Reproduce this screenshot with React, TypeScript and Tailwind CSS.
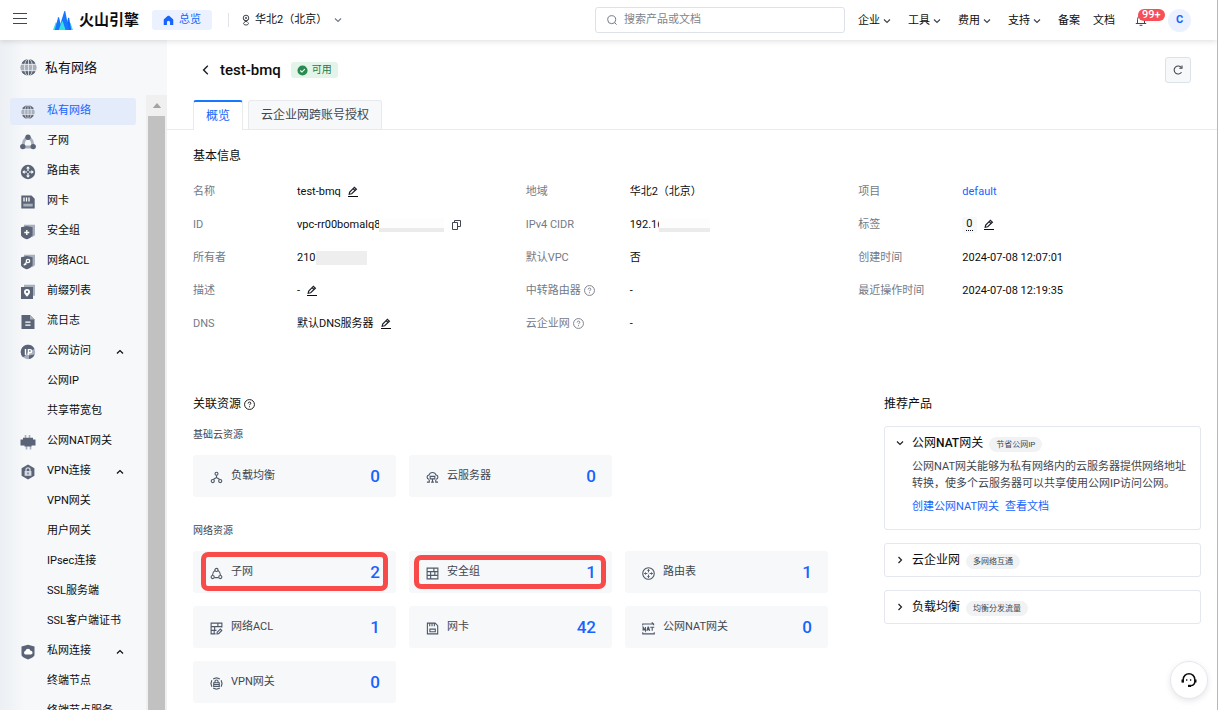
import React from "react";
import type { ReactNode } from "react";

type IconProps = { className?: string };

const DARK = "#5b6476";
const SOFT = "#a9b0bd";

/* ---------- small interface glyphs ---------- */

function Chevron({ dir, className = "" }: { dir: "up" | "down" | "left" | "right"; className?: string }) {
  const d = {
    up: "M2 6.5 5 3.5l3 3",
    down: "M2 3.5 5 6.5l3-3",
    left: "M6.5 1.5 3 5l3.5 3.5",
    right: "M3.5 2 6.5 5l-3 3",
  }[dir];
  return (
    <svg viewBox="0 0 10 10" fill="none" stroke="currentColor" strokeWidth="1.2" className={"shrink-0 " + className}>
      <path d={d} />
    </svg>
  );
}

function EditIcon() {
  return (
    <svg viewBox="0 0 12 12" className="size-3 shrink-0" fill="none" stroke="#1d2129" strokeWidth="1.2">
      <path d="M2.2 8.2 2.700 6 7.400 1.400 9.400 3.300 4.700 7.800Z" />
      <path d="M6.200 2.700 8.100 4.500" />
      <path d="M1 10.500h10" strokeWidth="1" stroke="#0c0d0e" />
    </svg>
  );
}

function CopyIcon() {
  return (
    <svg viewBox="0 0 12 12" className="size-3 shrink-0" fill="none" stroke="#42464e" strokeWidth="1">
      <path d="M2.500 3.500h5v7h-5z" />
      <path d="M4.500 3.500v-2h6v6h-3" />
    </svg>
  );
}

function HelpIcon() {
  return (
    <svg viewBox="0 0 12 12" className="size-[11px] shrink-0" fill="none" stroke="currentColor" strokeWidth="1">
      <circle cx="6" cy="6" r="5.400" />
      <path d="M4.500 4.900c0-1 .6-1.600 1.500-1.600s1.500.5 1.500 1.300c0 1-1.500 1-1.500 2.200" />
      <path d="M6 7.900v1.100" />
    </svg>
  );
}

function Logo() {
  return (
    <svg viewBox="0 0 20 19" className="h-[19px] w-5">
      <path d="M0 19 2.600 11.800c.2-.5.800-.5 1 0L6 19Z" fill="#35e0e0" />
      <path d="M20 19 17.400 11.800c-.2-.5-.8-.5-1 0L14 19Z" fill="#35e0e0" />
      <path d="M1.800 19 5 6.600c.2-.6.900-.6 1.100 0L9 19Z" fill="#1677ff" />
      <path d="M18.200 19 16.200 7.200c-.2-.6-.9-.6-1.100 0L12 19Z" fill="#1664ff" />
      <path d="M5.500 19 11.200.4c.2-.5.900-.5 1.100 0L16 19Z" fill="#1677ff" />
      <path d="M5.800 19 8.800 10.500c.2-.5.800-.5 1 0L12.600 19Z" fill="#35e0e0" />
    </svg>
  );
}

/* ---------- sidebar glyphs ---------- */

function GlobeIcon({ className = "size-4" }: IconProps) {
  return (
    <svg viewBox="0 0 16 16" className={className}>
      <circle cx="8" cy="8" r="7.700" fill={SOFT} />
      <path d="M2 3.200A7.700 7.700 0 0 1 14 3.200V4.800H2ZM2 12.800A7.700 7.700 0 0 0 14 12.800V11.200H2Z" fill={DARK} />
      <path d="M0 5h16M0 11h16M8 0v16" stroke="#f6f8fa" strokeWidth="0.700" />
      <ellipse cx="8" cy="8" rx="3.800" ry="8" fill="none" stroke="#f6f8fa" strokeWidth="0.700" />
    </svg>
  );
}

function SubnetIcon() {
  return (
    <svg viewBox="0 0 16 16" className="size-4">
      <path d="M8 3.5C4.5 4.5 2.8 8.5 3.5 13h9C13.2 8.5 11.5 4.5 8 3.5Z" fill="none" stroke={SOFT} strokeWidth="3" />
      <circle cx="8" cy="3.2" r="2.7" fill={DARK} />
      <circle cx="2.8" cy="12.6" r="2.7" fill={DARK} />
      <circle cx="13.2" cy="12.6" r="2.7" fill={DARK} />
    </svg>
  );
}

function RouteIcon() {
  return (
    <svg viewBox="0 0 16 16" className="size-4">
      <circle cx="8" cy="8" r="7.2" fill={DARK} />
      <path d="M8 2.2 10 4.6H8.6V7H7.4V4.6H6ZM8 13.8 10 11.4H8.6V9H7.4v2.4H6ZM2.2 8 4.6 6v1.4H7v1.2H4.6V10ZM13.8 8 11.4 6v1.4H9v1.2h2.4V10Z" fill="#fff" />
    </svg>
  );
}

function CardIcon() {
  return (
    <svg viewBox="0 0 16 16" className="size-4">
      <path d="M1.3 1.5h10.2L14.7 4.7V14.6H1.3Z" fill={DARK} />
      <path d="M4 3.5v4M6.5 3.5v4M9 3.5v4" stroke="#fff" strokeWidth="1.3" />
      <path d="M3.3 9.7h9.4v2.8H3.3z" fill={SOFT} />
    </svg>
  );
}

function ShieldBase({ children }: { children: ReactNode }) {
  return (
    <svg viewBox="0 0 16 16" className="size-4">
      <path d="M4 .8h11v10.5l-3 2V3H4Z" fill={SOFT} />
      <path d="M1 3.2 6.8 2l5.8 1.2v7.5c0 2-3 3.6-5.8 4.6C4 14.300 1 12.700 1 10.700Z" fill={DARK} />
      {children}
    </svg>
  );
}

function SecurityIcon() {
  return (
    <ShieldBase>
      <path d="M6.800 6v5M4.300 8.500h5" stroke="#fff" strokeWidth="1.4" />
    </ShieldBase>
  );
}

function AclIcon() {
  return (
    <ShieldBase>
      <circle cx="8" cy="7" r="1.700" fill="none" stroke="#fff" strokeWidth="1.300" />
      <path d="M6.700 8.300 3.800 11.300M5 9.500l1.200 1.200" stroke="#fff" strokeWidth="1.300" />
    </ShieldBase>
  );
}

function PrefixIcon() {
  return (
    <svg viewBox="0 0 16 16" className="size-4">
      <path d="M4 .8h11v11h-2.200V3H4Z" fill={SOFT} />
      <path d="M1 3h12v12H1z" fill={DARK} />
      <path d="M7 12.800C4.800 10.500 4 9.300 4 7.900a3 3 0 0 1 6 0c0 1.400-.800 2.600-3 4.900Z" fill="#fff" />
      <circle cx="7" cy="7.900" r="1.100" fill={DARK} />
    </svg>
  );
}

function LogIcon() {
  return (
    <svg viewBox="0 0 16 16" className="size-4">
      <path d="M1.500 1h8.500l4.500 4.500V15h-13Z" fill={DARK} />
      <path d="M10 1v4.500h4.500Z" fill={SOFT} />
      <path d="M5.300 8.200h5.200M5.300 11.200h5.200" stroke="#fff" strokeWidth="1.200" />
    </svg>
  );
}

function PublicIcon() {
  return (
    <svg viewBox="0 0 16 16" className="size-4">
      <circle cx="8" cy="8" r="7.200" fill={SOFT} />
      <path d="M8 .8A7.200 7.200 0 0 0 3 13.200L6 11 8 8l6.500-3A7.200 7.200 0 0 0 8 .8ZM9 11.500l5.500-1A7.200 7.200 0 0 1 9 15.100Z" fill={DARK} />
      <path d="M5.500 5v6M8.400 11V5.600h1.600a1.500 1.500 0 0 1 0 3.200H8.400" fill="none" stroke="#fff" strokeWidth="1.400" />
    </svg>
  );
}

function NatIcon() {
  return (
    <svg viewBox="0 0 16 16" className="size-4">
      <path d="M5.500 1v4M9.500 1v4M6.500 11v4.500M10.500 11v4.500" stroke={SOFT} strokeWidth="1.600" />
      <path d="M3 3.800h10v1.700h2.500v6h-4v1h-7v-1h-4v-6H3Z" fill={DARK} />
    </svg>
  );
}

function VpnIcon() {
  return (
    <svg viewBox="0 0 16 16" className="size-4">
      <path d="M8 .6 14.400 4.300v7.400L8 15.400 1.600 11.700V4.300Z" fill={DARK} />
      <path d="M6 7.500V5.800a2 2 0 0 1 4 0v1.700" fill="none" stroke="#d5d9e0" strokeWidth="1.300" />
      <path d="M4.600 7h6.800v4.800H4.600z" fill="#d5d9e0" />
      <path d="M8 8.500v1.800" stroke={DARK} strokeWidth="1.200" />
    </svg>
  );
}

function PrivateIcon() {
  return (
    <svg viewBox="0 0 16 16" className="size-4">
      <path d="M1.500 2.500 8 .8l6.500 1.700v8.200c0 2-3.500 3.700-6.500 4.700-3-1-6.500-2.700-6.500-4.700Z" fill={DARK} />
      <path d="M5.500 10.500a1.900 1.900 0 0 1 0-3.700 2.600 2.600 0 0 1 5-.1 1.900 1.900 0 0 1 .3 3.800Z" fill="#fff" />
    </svg>
  );
}

/* ---------- resource glyphs ---------- */

function Line({ children }: { children: ReactNode }) {
  return (
    <svg viewBox="0 0 14 14" className="mt-[2px] size-[13px] shrink-0" fill="none" stroke="#4e5969" strokeWidth="1.200">
      {children}
    </svg>
  );
}

const lines = {
  balance: (
    <Line>
      <circle cx="7" cy="3" r="1.600" />
      <circle cx="3" cy="10.800" r="1.700" />
      <circle cx="11" cy="10.800" r="1.700" />
      <path d="M7 4.600V7M3.500 9.200 7 7l3.500 2.200" />
    </Line>
  ),
  server: (
    <Line>
      <path d="M3 9a2.400 2.400 0 0 1 .2-4.700 4 4 0 0 1 7.600 0A2.400 2.400 0 0 1 11 9" />
      <path d="M4.500 5.800h5v2.700h-5zM7 8.500v3.500M5.500 12h3M1 12h2.500V9.500M13 12h-2.500V9.500" />
    </Line>
  ),
  subnet: (
    <Line>
      <circle cx="7" cy="3.200" r="1.700" />
      <circle cx="2.900" cy="10.800" r="1.700" />
      <circle cx="11.100" cy="10.800" r="1.700" />
      <path d="M5.400 3.600C3.600 4.800 2.700 6.500 2.700 9M8.600 3.600c1.800 1.200 2.700 2.900 2.700 5.400M4.800 11.500h4.400" />
    </Line>
  ),
  security: (
    <Line>
      <path d="M1.200 1.200h11.600v11.600H1.200zM1.200 5h11.600M1.200 9h11.600M8.500 1.200V5M5 5v4M9.500 5v4M5 9v3.800" />
    </Line>
  ),
  route: (
    <Line>
      <circle cx="7" cy="7" r="6.200" />
      <path d="M7 2.500v3.300M7 8.200v3.300M2.500 7h3.300M8.200 7h3.300M5.800 4 7 2.700 8.200 4M5.800 10 7 11.300 8.200 10M4 5.800 2.700 7 4 8.200M10 5.800 11.300 7 10 8.200" strokeWidth="1" />
    </Line>
  ),
  acl: (
    <Line>
      <path d="M12.800 6V1.200H1.200v11.600H6M1.200 5h11.600M1.200 9H7M8.500 1.200V5M5 5v4M4.500 9v3.800" />
      <path d="m7.500 12.800.3-1.800 3.400-3.400 1.500 1.500-3.400 3.400Z" />
    </Line>
  ),
  card: (
    <Line>
      <path d="M1.500 1.200h8.300l2.800 2.800v8.800H1.500zM4 1.200v3.500M6.500 1.200v3.500M9 1.200v3.500M4.200 7.700h5.800v2.800H4.200z" />
    </Line>
  ),
  nat: (
    <Line>
      <path d="M.8 3.500V2.200h11M10.500.5l2 1.700v1.300M.8 11v1.800h12.400V11" />
      <path d="M1.200 9.500v-4l2.500 4v-4M5.200 9.500l1.300-4h.5l1.300 4M5.600 8.200h2.300M8.900 5.700h4.300M11 5.700v3.800" />
    </Line>
  ),
  vpn: (
    <Line>
      <path d="M3.500 2 7 .8 10.500 2M12 3.500l1 3.500-1 3.500M10.500 12 7 13.200 3.500 12M2 10.500 1 7l1-3.500" />
      <path d="M5.300 6V5a1.700 1.700 0 0 1 3.400 0v1M4 6.200h6v4H4zM4 8.200h6" />
    </Line>
  ),
};

/* ---------- header ---------- */

function Header() {
  const menus = ["企业", "工具", "费用", "支持"];
  return (
    <header className="relative z-10 flex h-10 shrink-0 items-center bg-white pr-[26px] pl-[13px] text-[11px] leading-4 text-[#0c0d0e] shadow-[0_1px_6px_rgba(0,0,0,0.14)]">
      <button type="button" aria-label="菜单" className="flex size-[14px] items-center">
        <svg viewBox="0 0 14 14" className="size-[14px]" stroke="#42464e" strokeWidth="1">
          <path d="M0 .5h14M0 5.500h14M0 10.500h14" />
        </svg>
      </button>
      <a href="#" className="ml-[26px] flex items-center gap-[6px]">
        <Logo />
        <span className="text-[15px] leading-5 font-bold">火山引擎</span>
      </a>
      <a href="#" className="ml-[13px] flex h-5 items-center gap-[5px] rounded-[3px] bg-[#ebf1ff] px-[11px] text-[#1664ff]">
        <svg viewBox="0 0 12 12" className="size-[11px]" fill="#1664ff">
          <path d="M6 .8c.4 0 .7.100 1 .4l3.700 3.200c.4.300.5.700.5 1.100V11H7.700V8a1.700 1.700 0 0 0-3.400 0v3H.8V5.500c0-.400.100-.8.500-1.100L5 1.200c.3-.3.600-.4 1-.4Z" />
        </svg>
        总览
      </a>
      <span className="ml-4 h-[14px] w-px bg-[#e1e4e9]" />
      <button type="button" className="ml-3 flex items-center">
        <svg viewBox="0 0 10 12" className="mr-1 h-3 w-[10px]" fill="none" stroke="#42464e" strokeWidth="1">
          <circle cx="5" cy="4" r="2.800" />
          <circle cx="5" cy="4" r="0.700" />
          <path d="M2.600 5.600 6.500 8.200M7.400 5.600 3 8.500c-1 .8-.5 2.500 2 2.500s3-1.700 2-2.500" />
        </svg>
        华北2（北京）
        <Chevron dir="down" className="ml-[6px] size-[10px] text-[#737a87]" />
      </button>
      <div className="flex-1" />
      <label className="flex h-[26px] w-[250px] items-center gap-[6px] rounded-[3px] border border-[#dde2e9] px-[10px]">
        <svg viewBox="0 0 12 12" className="size-3 shrink-0" fill="none" stroke="#737a87" strokeWidth="1">
          <circle cx="5.700" cy="5.700" r="4" />
          <path d="m8.600 8.600 2 2" />
        </svg>
        <input
          type="text"
          aria-label="搜索"
          placeholder="搜索产品或文档"
          className="w-full min-w-0 bg-transparent outline-none placeholder:text-[#80838a]"
        />
      </label>
      <nav className="ml-[13px] flex items-center pt-px">
        {menus.map((m) => (
          <button key={m} type="button" className="mr-4 flex items-center gap-[2px]">
            {m}
            <Chevron dir="down" className="size-[10px] text-[#42464e]" />
          </button>
        ))}
        <a href="#" className="mr-[13px]">备案</a>
        <a href="#">文档</a>
      </nav>
      <button type="button" aria-label="消息" className="relative ml-5 flex size-3 items-center">
        <svg viewBox="0 0 12 12" className="size-3" fill="none" stroke="#42464e" strokeWidth="1">
          <path d="M2.500 9.500V5.300a3.500 3.500 0 0 1 7 0v4.200M.8 9.500h10.400M4.600 11.300h2.800" />
        </svg>
        <span className="absolute -top-[5px] left-[3px] flex h-3 items-center rounded-full bg-[#f74e57] px-1 text-[11px] leading-3 font-medium text-white">
          99+
        </span>
      </button>
      <button type="button" className="ml-[21px] flex size-[23px] items-center justify-center rounded-full bg-[#ebf1ff] text-[11px] font-bold text-[#1664ff]">
        C
      </button>
    </header>
  );
}

/* ---------- sidebar ---------- */

type NavItem = { label: string; icon?: ReactNode; open?: boolean; active?: boolean };

const navItems: NavItem[] = [
  { label: "私有网络", icon: <GlobeIcon className="size-[14px]" />, active: true },
  { label: "子网", icon: <SubnetIcon /> },
  { label: "路由表", icon: <RouteIcon /> },
  { label: "网卡", icon: <CardIcon /> },
  { label: "安全组", icon: <SecurityIcon /> },
  { label: "网络ACL", icon: <AclIcon /> },
  { label: "前缀列表", icon: <PrefixIcon /> },
  { label: "流日志", icon: <LogIcon /> },
  { label: "公网访问", icon: <PublicIcon />, open: true },
  { label: "公网IP" },
  { label: "共享带宽包" },
  { label: "公网NAT网关", icon: <NatIcon /> },
  { label: "VPN连接", icon: <VpnIcon />, open: true },
  { label: "VPN网关" },
  { label: "用户网关" },
  { label: "IPsec连接" },
  { label: "SSL服务端" },
  { label: "SSL客户端证书" },
  { label: "私网连接", icon: <PrivateIcon />, open: true },
  { label: "终端节点" },
  { label: "终端节点服务" },
];

function Sidebar() {
  return (
    <aside className="flex w-[167px] shrink-0 flex-col bg-linear-to-r from-[#eceff3] to-[#f6f8fa] to-15%">
      <div className="flex h-[55px] shrink-0 items-center gap-2 pl-5 text-[13px] leading-5 text-[#0c0d0e]">
        <GlobeIcon className="size-[17px]" />
        私有网络
      </div>
      <div className="flex min-h-0 flex-1">
        <ul className="flex flex-1 flex-col gap-[3px] overflow-hidden px-[10px] pt-[3px]">
          {navItems.map((n) => (
            <li key={n.label} className="shrink-0">
              <a
                href="#"
                className={
                  "flex h-[27px] items-center rounded-[3px] pr-[11px] pl-[10px] text-[11px] leading-4 " +
                  (n.active ? "bg-[#e4ebfa] text-[#1664ff]" : "text-[#0c0d0e]")
                }
              >
                <span className="mr-[11px] flex w-4 justify-center">{n.icon}</span>
                <span className="flex-1 pb-[2px] whitespace-nowrap">{n.label}</span>
                {n.open && <Chevron dir="up" className="mt-px size-[10px]" />}
              </a>
            </li>
          ))}
        </ul>
        <div className="flex w-[21px] shrink-0 flex-col items-center bg-[#f0f0f0]">
          <svg viewBox="0 0 10 6" className="my-2 h-[5px] w-[10px]" fill="#a3a3a3">
            <path d="M5 0 10 6H0Z" />
          </svg>
          <div className="w-[17px] flex-1 bg-[#c1c1c1]" />
        </div>
      </div>
    </aside>
  );
}

/* ---------- details ---------- */

function Field({ label, help, children }: { label: string; help?: boolean; children: ReactNode }) {
  return (
    <div className="flex h-[33px] items-center">
      <dt className="flex w-[104px] shrink-0 items-center gap-[3px] text-[#737a87]">
        {label}
        {help && <HelpIcon />}
      </dt>
      <dd className="flex items-center whitespace-nowrap text-[#0c0d0e]">{children}</dd>
    </div>
  );
}

function EditButton({ label }: { label: string }) {
  return (
    <button type="button" aria-label={label} className="ml-[6px] pt-px">
      <EditIcon />
    </button>
  );
}

function BasicInfo() {
  return (
    <section className="px-[26px] pt-[17px] text-[11px] leading-4">
      <h2 className="text-[12px] leading-[18px] text-[#0c0d0e]">基本信息</h2>
      <dl className="mt-[10px] grid grid-cols-3">
        <Field label="名称">
          test-bmq
          <EditButton label="编辑名称" />
        </Field>
        <Field label="地域">华北2（北京）</Field>
        <Field label="项目">
          <a href="#" className="text-[#1664ff]">default</a>
        </Field>
        <Field label="ID">
          vpc-rr00bomalq8
          <span className="-ml-px h-[14px] w-[65px] border-b-4 border-[#ebebeb] bg-[#fdfdfd]" />
          <button type="button" aria-label="复制" className="ml-[6px]">
            <CopyIcon />
          </button>
        </Field>
        <Field label="IPv4 CIDR">
          192.16
          <span className="relative -ml-1 h-[14px] w-[51px] border-b-4 border-[#ebebeb] bg-[#fdfdfd]" />
        </Field>
        <Field label="标签">
          <span className="flex h-4 items-center rounded-[2px] bg-[#f6f8fa] px-1">
            <span className="border-b border-dotted border-[#0c0d0e] leading-3">0</span>
          </span>
          <EditButton label="编辑标签" />
        </Field>
        <Field label="所有者">
          210
          <span className="h-[14px] w-[51px] bg-[#eeeeee]" />
        </Field>
        <Field label="默认VPC">否</Field>
        <Field label="创建时间">2024-07-08 12:07:01</Field>
        <Field label="描述">
          -
          <EditButton label="编辑描述" />
        </Field>
        <Field label="中转路由器" help>-</Field>
        <Field label="最近操作时间">2024-07-08 12:19:35</Field>
        <Field label="DNS">
          默认DNS服务器
          <EditButton label="编辑DNS" />
        </Field>
        <Field label="云企业网" help>-</Field>
      </dl>
    </section>
  );
}

/* ---------- resources ---------- */

type Resource = { label: string; count: number; icon: ReactNode; mark?: string };

const basic: Resource[] = [
  { label: "负载均衡", count: 0, icon: lines.balance },
  { label: "云服务器", count: 0, icon: lines.server },
];

const network: Resource[] = [
  { label: "子网", count: 2, icon: lines.subnet, mark: "top-px right-2 bottom-[2px] left-2" },
  { label: "安全组", count: 1, icon: lines.security, mark: "top-1 right-[6px] bottom-1 left-[5px]" },
  { label: "路由表", count: 1, icon: lines.route },
  { label: "网络ACL", count: 1, icon: lines.acl },
  { label: "网卡", count: 42, icon: lines.card },
  { label: "公网NAT网关", count: 0, icon: lines.nat },
  { label: "VPN网关", count: 0, icon: lines.vpn },
];

function ResourceGrid({ title, items }: { title: string; items: Resource[] }) {
  return (
    <>
      <h3 className="text-[10px] leading-4 text-[#42464e]">{title}</h3>
      <div className="mt-3 grid grid-cols-3 gap-[13px]">
        {items.map((r) => (
          <a key={r.label} href="#" className="relative flex h-[42px] items-center rounded-[3px] bg-[#f6f8fa] pr-4 pl-[17px]">
            {r.icon}
            <span className="ml-2 flex-1 text-[11px] leading-4 text-[#42464e]">{r.label}</span>
            <span className="text-[17px] leading-6 font-medium text-[#1664ff]">{r.count}</span>
            {r.mark && <span className={"absolute rounded-[7px] border-[5px] border-[#f84a48] " + r.mark} />}
          </a>
        ))}
      </div>
    </>
  );
}

function Product({ name, tag, children }: { name: ReactNode; tag: string; children?: ReactNode }) {
  return (
    <article className="rounded-[3px] border border-[#e4e7ee] py-[7px] pr-2 pl-[10px]">
      <button type="button" className="flex h-[18px] items-center">
        <Chevron dir={children ? "down" : "right"} className="mr-[7px] size-[10px] text-[#1d2129]" />
        <span className="text-[12px] leading-[18px] text-[#0c0d0e]">{name}</span>
        <span className="mt-[3px] ml-[6px] rounded-full bg-[#f1f2f4] px-[7px] text-[8px] leading-[15px] text-[#42464e]">
          {tag}
        </span>
      </button>
      {children}
    </article>
  );
}

function Resources() {
  return (
    <div className="mt-[55px] flex gap-14 pr-4 pl-[26px]">
      <section className="min-w-0 flex-1">
        <h2 className="flex items-center gap-[3px] text-[12px] leading-[18px] text-[#0c0d0e]">
          关联资源
          <HelpIcon />
        </h2>
        <div className="mt-[14px]">
          <ResourceGrid title="基础云资源" items={basic} />
        </div>
        <div className="mt-[26px]">
          <ResourceGrid title="网络资源" items={network} />
        </div>
      </section>
      <section className="w-[317px] shrink-0">
        <h2 className="text-[12px] leading-[18px] text-[#0c0d0e]">推荐产品</h2>
        <div className="mt-[13px] flex flex-col gap-[13px]">
          <Product
            name={
              <>
                公网<span className="font-medium">NAT</span>网关
              </>
            }
            tag="节省公网IP"
          >
            <div className="pt-[6px] pb-[7px] pl-[17px] text-[11px] leading-[17px]">
              <p className="text-[#42464e]">
                公网NAT网关能够为私有网络内的云服务器提供网络地址转换，使多个云服务器可以共享使用公网IP访问公网。
              </p>
              <p className="mt-[6px] flex gap-[6px] text-[#1664ff]">
                <a href="#">创建公网NAT网关</a>
                <a href="#">查看文档</a>
              </p>
            </div>
          </Product>
          <Product name="云企业网" tag="多网络互通" />
          <Product name="负载均衡" tag="均衡分发流量" />
        </div>
      </section>
    </div>
  );
}

/* ---------- page ---------- */

export default function App() {
  return (
    <div className="flex h-screen flex-col overflow-hidden border-r border-[#b5b8bd] bg-white font-[Roboto,'Noto_Sans_CJK_SC',sans-serif]">
      <Header />
      <div className="flex min-h-0 flex-1">
        <Sidebar />
        <main className="min-w-0 flex-1 overflow-hidden">
          <div className="flex h-[60px] items-center pr-[26px] pl-[33px]">
            <button type="button" aria-label="返回">
              <Chevron dir="left" className="size-3 text-[#1d2129]" />
            </button>
            <h1 className="ml-2 text-[15px] leading-5 font-medium text-[#0c0d0e]">test-bmq</h1>
            <span className="ml-[10px] flex h-4 items-center gap-1 rounded-[3px] bg-[#e3f5e8] px-[6px] text-[10px] leading-4 text-[#277a45]">
              <svg viewBox="0 0 12 12" className="size-[11px]">
                <circle cx="6" cy="6" r="5.500" fill="#2a8a4f" />
                <path d="m3.600 6 1.800 1.700L8.500 4.600" fill="none" stroke="#fff" strokeWidth="1.200" />
              </svg>
              可用
            </span>
            <button
              type="button"
              aria-label="刷新"
              className="ml-auto flex size-[26px] items-center justify-center rounded-[3px] border border-[#dde2e9] bg-[#f6f8fa]"
            >
              <svg viewBox="0 0 12 12" className="size-3" fill="none" stroke="#42464e" strokeWidth="1.100">
                <path d="M9.500 8.200A4 4 0 1 1 9.400 3.700" />
                <path d="M10 1.500v2.700H7.300" />
              </svg>
            </button>
          </div>
          <div role="tablist" className="flex h-[30px] gap-[5px] border-b border-[#e8eaee] px-[26px] text-[12px] leading-[18px]">
            <button
              type="button"
              role="tab"
              aria-selected="true"
              className="-mb-px rounded-t-[3px] border-x border-t-2 border-x-[#e8eaee] border-t-[#1677ff] bg-white px-3 text-[#1664ff]"
            >
              概览
            </button>
            <button
              type="button"
              role="tab"
              aria-selected="false"
              className="rounded-t-[3px] border border-b-0 border-[#e8eaee] bg-[#f6f8fa] px-3 text-[#42464e]"
            >
              云企业网跨账号授权
            </button>
          </div>
          <BasicInfo />
          <Resources />
        </main>
      </div>
      <button
        type="button"
        aria-label="客服"
        className="fixed right-[10px] bottom-[11px] z-20 flex size-[38px] items-center justify-center rounded-full border border-[#e4e7ee] bg-white shadow-[0_2px_6px_rgba(0,0,0,0.1)]"
      >
        <svg viewBox="0 0 16 16" className="size-4" fill="none" stroke="#0c0d0e" strokeWidth="1.500">
          <path d="M2.200 10.500V7.500a5.800 5.800 0 0 1 11.600 0v2.200c0 2-1.500 3.600-4.300 4.100" />
          <path d="M1.500 7.500v3M14.500 7.500v3" strokeWidth="2" />
          <path d="M7 13.900h3" strokeWidth="2.200" />
          <path d="M5.700 7.200v1.600M9.600 7.200v1.600" strokeWidth="1.300" />
        </svg>
      </button>
    </div>
  );
}
